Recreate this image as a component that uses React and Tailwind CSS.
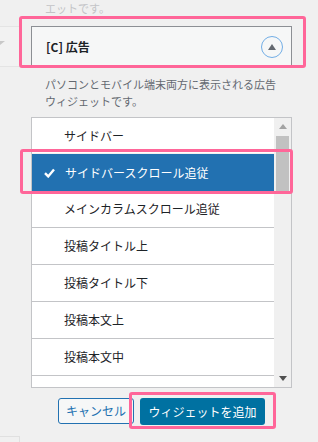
import React from 'react';

const items = [
  'サイドバー',
  'サイドバースクロール追従',
  'メインカラムスクロール追従',
  '投稿タイトル上',
  '投稿タイトル下',
  '投稿本文上',
  '投稿本文中',
];

const Check = () => (
  <svg width="11" height="10" viewBox="0 0 11 10" className="shrink-0">
    <path d="M1 5.2 L4.2 8.4 L10 1.4" fill="none" stroke="#fff" strokeWidth="2.4" strokeLinejoin="miter" />
  </svg>
);

const ListItem = ({ label, selected, first }) => (
  <div
    className={
      selected
        ? 'h-[37px] shrink-0 flex items-center gap-[10px] pl-[12px] bg-[#2271b1] text-white'
        : first
        ? 'h-[36px] shrink-0 flex items-center pl-[32px] border-b border-[#f0f0f1] text-[#1d2327]'
        : 'h-[37px] shrink-0 flex items-center pl-[32px] border-b border-[#c3c4c7] text-[#1d2327]'
    }
  >
    {selected && <Check />}
    <span>{label}</span>
  </div>
);

export default function App() {
  return (
    <div className="relative w-[318px] h-[442px] overflow-hidden bg-[#f0f0f0] flex font-['Noto_Sans_CJK_JP','Liberation_Sans',sans-serif]">
      {/* faded neighbour widget on the left */}
      <div className="w-[20px] shrink-0 flex flex-col">
        <div className="h-[26px]" />
        <div className="h-[41px] border-y border-[#e4e4e4] bg-[#f2f2f2] flex items-center">
          <svg width="5" height="6" viewBox="0 0 5 6" className="-mt-[7px]">
            <path d="M0 1 L5 1 L0 5 Z" fill="#c8c8c8" />
          </svg>
        </div>
        <div className="flex-1" />
        <div className="h-[6px] border-t border-r border-[#e0e0e0]" />
      </div>

      <div className="ml-[11px] w-[261px] shrink-0 flex flex-col">
        <div className="h-[26px] pl-[14px] text-[11px] leading-[17px] text-[#c3c4c7]">エットです。</div>

        <div className="h-[41px] border border-b-0 border-[#8c8f94] bg-[#f6f7f7] flex items-center justify-between pl-[14px] pr-[8px]">
          <span className="text-[12px] font-semibold text-[#1d2327]">[C] 広告</span>
          <div className="w-[22px] h-[22px] rounded-full border-[1.5px] border-[#72aee6] flex items-center justify-center">
            <svg width="8" height="6" viewBox="0 0 8 6">
              <path d="M4 0 L8 6 L0 6 Z" fill="#646970" />
            </svg>
          </div>
        </div>

        <p className="mt-[9px] pl-[14px] text-[11px] leading-[17px] text-[#646970]">
          パソコンとモバイル端末両方に表示される広告
          <br />
          ウィジェットです。
        </p>

        <div className="mt-[7px] h-[271px] border border-[#c3c4c7] bg-white flex text-[12px]">
          <div className="flex-1 flex flex-col overflow-hidden">
            {items.map((label, i) => (
              <ListItem key={label} label={label} selected={i === 1} first={i === 0} />
            ))}
            {/* next row, scrolled out of view */}
            <div className="flex-1" />
          </div>
          <div className="w-[17px] shrink-0 bg-[#f0f0f0] flex flex-col items-center">
            <div className="h-[17px] flex items-center justify-center">
              <svg width="8" height="5" viewBox="0 0 8 5">
                <path d="M4 0 L8 5 L0 5 Z" fill="#a3a3a3" />
              </svg>
            </div>
            <div className="mt-[1px] w-[13px] h-[56px] bg-[#c1c1c1]" />
            <div className="flex-1" />
            <div className="h-[17px] flex items-center justify-center">
              <svg width="8" height="5" viewBox="0 0 8 5">
                <path d="M0 0 L8 0 L4 5 Z" fill="#505050" />
              </svg>
            </div>
          </div>
        </div>

        <div className="mt-[10px] ml-[27px] flex items-start gap-[6px] text-[12px] leading-[16px]">
          <button className="w-[76px] h-[26px] flex items-center justify-center whitespace-nowrap rounded-[3px] border border-[#2271b1] bg-[#f6f7f7] text-[#2271b1]">
            キャンセル
          </button>
          <button className="w-[125px] h-[27px] flex items-center justify-center whitespace-nowrap rounded-[3px] bg-[#0071a1] text-white">
            ウィジェットを追加
          </button>
        </div>
      </div>

      {/* pink highlight annotations */}
      <div className="absolute left-[19px] top-[16px] w-[287px] h-[52px] border-[3px] border-[#ff6699] rounded-[3px]" />
      <div className="absolute left-[20px] top-[149px] w-[273px] h-[45px] border-[3px] border-[#ff6699] rounded-[3px]" />
      <div className="absolute left-[129px] top-[392px] w-[147px] h-[37px] border-[3px] border-[#ff6699] rounded-[3px]" />
    </div>
  );
}
